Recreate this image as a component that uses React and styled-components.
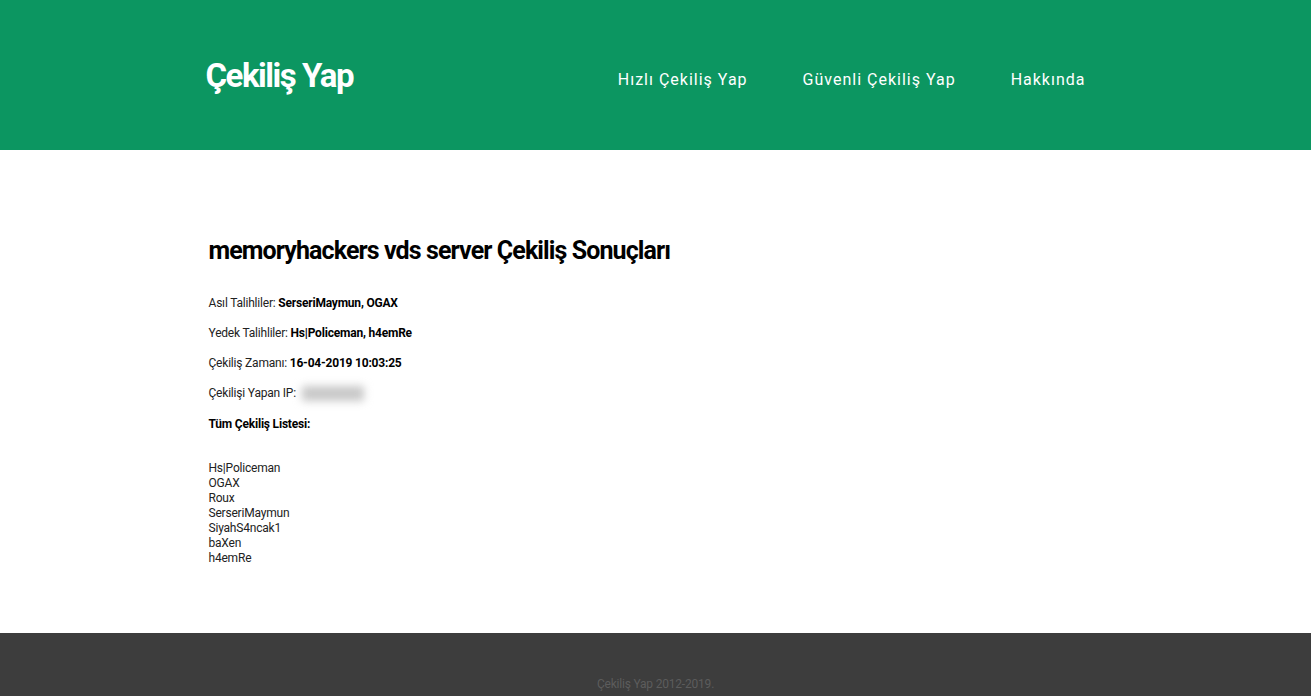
import styled, { createGlobalStyle } from "styled-components";

const Global = createGlobalStyle`
  body {
    margin: 0;
    font-family: Roboto, "Noto Sans", sans-serif;
    background: #fff;
    color: #111;
  }
`;

const Header = styled.header`
  background: #0c9661;
  height: 150px;
`;

const Wrap = styled.div`
  width: 900px;
  margin: 0 auto;
  box-sizing: border-box;
`;

const HeaderInner = styled(Wrap)`
  height: 100%;
  display: flex;
  align-items: center;
  justify-content: space-between;
`;

const Logo = styled.a`
  color: #fff;
  font-weight: 700;
  font-size: 33px;
  letter-spacing: -1.5px;
  text-decoration: none;
  margin-top: 0;
`;

const Nav = styled.nav`
  display: flex;
  gap: 55px;
  margin-right: 20px;
  margin-top: 9px;
`;

const NavLink = styled.a`
  color: #fff;
  font-size: 16px;
  letter-spacing: 1px;
  text-decoration: none;
`;

const Main = styled(Wrap)`
  padding: 86px 0 67px 3px;
`;

const Title = styled.h1`
  margin: 0 0 31px;
  font-size: 25px;
  font-weight: 700;
  letter-spacing: -0.9px;
  color: #000;
`;

const Line = styled.p`
  margin: 0 0 16px;
  font-size: 12px;
  line-height: 14px;
  letter-spacing: -0.2px;
  color: #222;
  b { color: #000; }
`;

const Blur = styled.span`
  display: inline-block;
  filter: blur(4px);
  background: #c8c8c8;
  width: 62px;
  height: 15px;
  vertical-align: middle;
  margin-left: 3px;
`;

const List = styled.div`
  margin-top: 30px;
  font-size: 12px;
  line-height: 15px;
  letter-spacing: -0.2px;
  color: #222;
`;

const Footer = styled.footer`
  background: #3d3d3d;
  height: 63px;
  display: flex;
  justify-content: center;
  align-items: flex-end;
  padding-bottom: 5px;
  box-sizing: border-box;
`;

const FootText = styled.span`
  color: #5c5c5c;
  font-size: 12px;
  letter-spacing: -0.2px;
`;

const names = ["Hs|Policeman", "OGAX", "Roux", "SerseriMaymun", "SiyahS4ncak1", "baXen", "h4emRe"];

export default function App() {
  return (
    <>
      <Global />
      <Header>
        <HeaderInner>
          <Logo href="#">Çekiliş Yap</Logo>
          <Nav>
            <NavLink href="#">Hızlı Çekiliş Yap</NavLink>
            <NavLink href="#">Güvenli Çekiliş Yap</NavLink>
            <NavLink href="#">Hakkında</NavLink>
          </Nav>
        </HeaderInner>
      </Header>
      <Main>
        <Title>memoryhackers vds server Çekiliş Sonuçları</Title>
        <Line>Asıl Talihliler: <b>SerseriMaymun, OGAX</b></Line>
        <Line>Yedek Talihliler: <b>Hs|Policeman, h4emRe</b></Line>
        <Line>Çekiliş Zamanı: <b>16-04-2019 10:03:25</b></Line>
        <Line>Çekilişi Yapan IP: <Blur /></Line>
        <Line><b>Tüm Çekiliş Listesi:</b></Line>
        <List>
          {names.map((n) => (
            <div key={n}>{n}</div>
          ))}
        </List>
      </Main>
      <Footer>
        <FootText>Çekiliş Yap 2012-2019.</FootText>
      </Footer>
    </>
  );
}
